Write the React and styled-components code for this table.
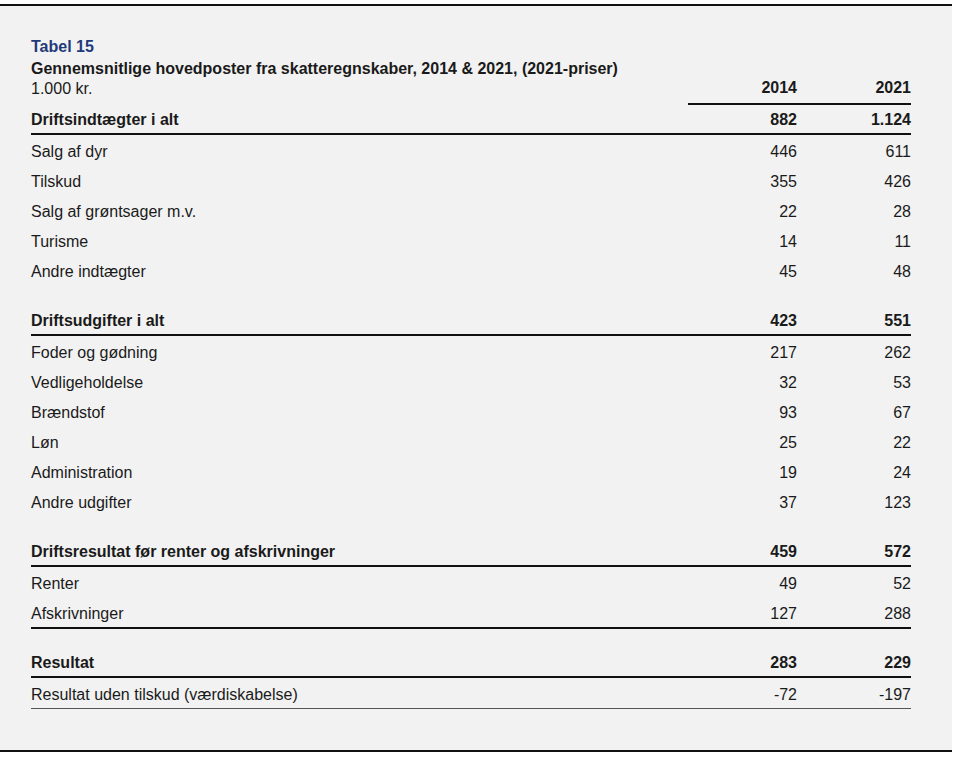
import styled, { createGlobalStyle } from 'styled-components';

const GlobalStyle = createGlobalStyle`
  html, body {
    margin: 0;
    padding: 0;
    background: #ffffff;
  }
  body {
    font-family: "Liberation Sans", Arial, sans-serif;
    color: #1a1a1a;
  }
`;

const Panel = styled.section`
  box-sizing: border-box;
  margin-top: 4px;
  width: 952px;
  height: 748px;
  border-top: 2px solid #111;
  border-bottom: 2px solid #111;
  background: #f2f2f2;
  padding: 32px 41px 0 31px;
`;

const Caption = styled.h1`
  margin: 0;
  font-size: 16px;
  line-height: 18px;
  font-weight: bold;
  color: #1f3a7a;
`;

const Title = styled.h2`
  margin: 4px 0 0;
  font-size: 16px;
  line-height: 18px;
  font-weight: bold;
`;

const ruleWidth = (rule) => (rule === 'thin' ? 1 : rule ? 2 : 0);

// rows keep the reference's pitch; the text sits a little low in each row
const Row = styled.div`
  box-sizing: border-box;
  display: grid;
  grid-template-columns: 1fr 109px 114px;
  font-size: 16px;
  height: ${(p) => (p.$bold ? 28 : 30) + ruleWidth(p.$rule)}px;
  padding-top: ${(p) => (p.$bold ? '2px' : '4px')};
  line-height: 26px;
  font-weight: ${(p) => (p.$bold ? 'bold' : 'normal')};
  margin-top: ${(p) => p.$gap || 0}px;
  border-bottom: ${(p) => (p.$rule === 'thin' ? '1px solid #555' : p.$rule ? '2px solid #111' : 'none')};
`;

const HeadRow = styled.div`
  display: grid;
  grid-template-columns: 1fr 109px 114px;
  align-items: end;
  font-size: 16px;
  line-height: 18px;
  margin-top: 1px;
`;

const HeadLabel = styled.div`
  padding-bottom: 7px;
`;

const HeadCell = styled.div`
  text-align: right;
  font-weight: bold;
  padding-bottom: 6px;
  border-bottom: 2px solid #111;
`;

const Num = styled.div`
  text-align: right;
`;

const sections = [
  {
    gap: 0,
    head: ['Driftsindtægter i alt', '882', '1.124'],
    rows: [
      ['Salg af dyr', '446', '611'],
      ['Tilskud', '355', '426'],
      ['Salg af grøntsager m.v.', '22', '28'],
      ['Turisme', '14', '11'],
      ['Andre indtægter', '45', '48'],
    ],
  },
  {
    gap: 21,
    head: ['Driftsudgifter i alt', '423', '551'],
    rows: [
      ['Foder og gødning', '217', '262'],
      ['Vedligeholdelse', '32', '53'],
      ['Brændstof', '93', '67'],
      ['Løn', '25', '22'],
      ['Administration', '19', '24'],
      ['Andre udgifter', '37', '123'],
    ],
  },
  {
    gap: 21,
    head: ['Driftsresultat før renter og afskrivninger', '459', '572'],
    rows: [
      ['Renter', '49', '52'],
      ['Afskrivninger', '127', '288'],
    ],
    closing: 'thick',
  },
  {
    gap: 19,
    head: ['Resultat', '283', '229'],
    rows: [['Resultat uden tilskud (værdiskabelse)', '-72', '-197']],
    closing: 'thin',
  },
];

export default function App() {
  return (
    <>
      <GlobalStyle />
      <Panel>
        <Caption>Tabel 15</Caption>
        <Title>Gennemsnitlige hovedposter fra skatteregnskaber, 2014 &amp; 2021, (2021-priser)</Title>
        <HeadRow>
          <HeadLabel>1.000 kr.</HeadLabel>
          <HeadCell>2014</HeadCell>
          <HeadCell>2021</HeadCell>
        </HeadRow>
        {sections.map((s) => (
          <div key={s.head[0]}>
            <Row $bold $rule $gap={s.gap}>
              <div>{s.head[0]}</div>
              <Num>{s.head[1]}</Num>
              <Num>{s.head[2]}</Num>
            </Row>
            {s.rows.map((r, j) => (
              <Row key={r[0]} $rule={j === s.rows.length - 1 ? s.closing : undefined}>
                <div>{r[0]}</div>
                <Num>{r[1]}</Num>
                <Num>{r[2]}</Num>
              </Row>
            ))}
          </div>
        ))}
      </Panel>
    </>
  );
}
